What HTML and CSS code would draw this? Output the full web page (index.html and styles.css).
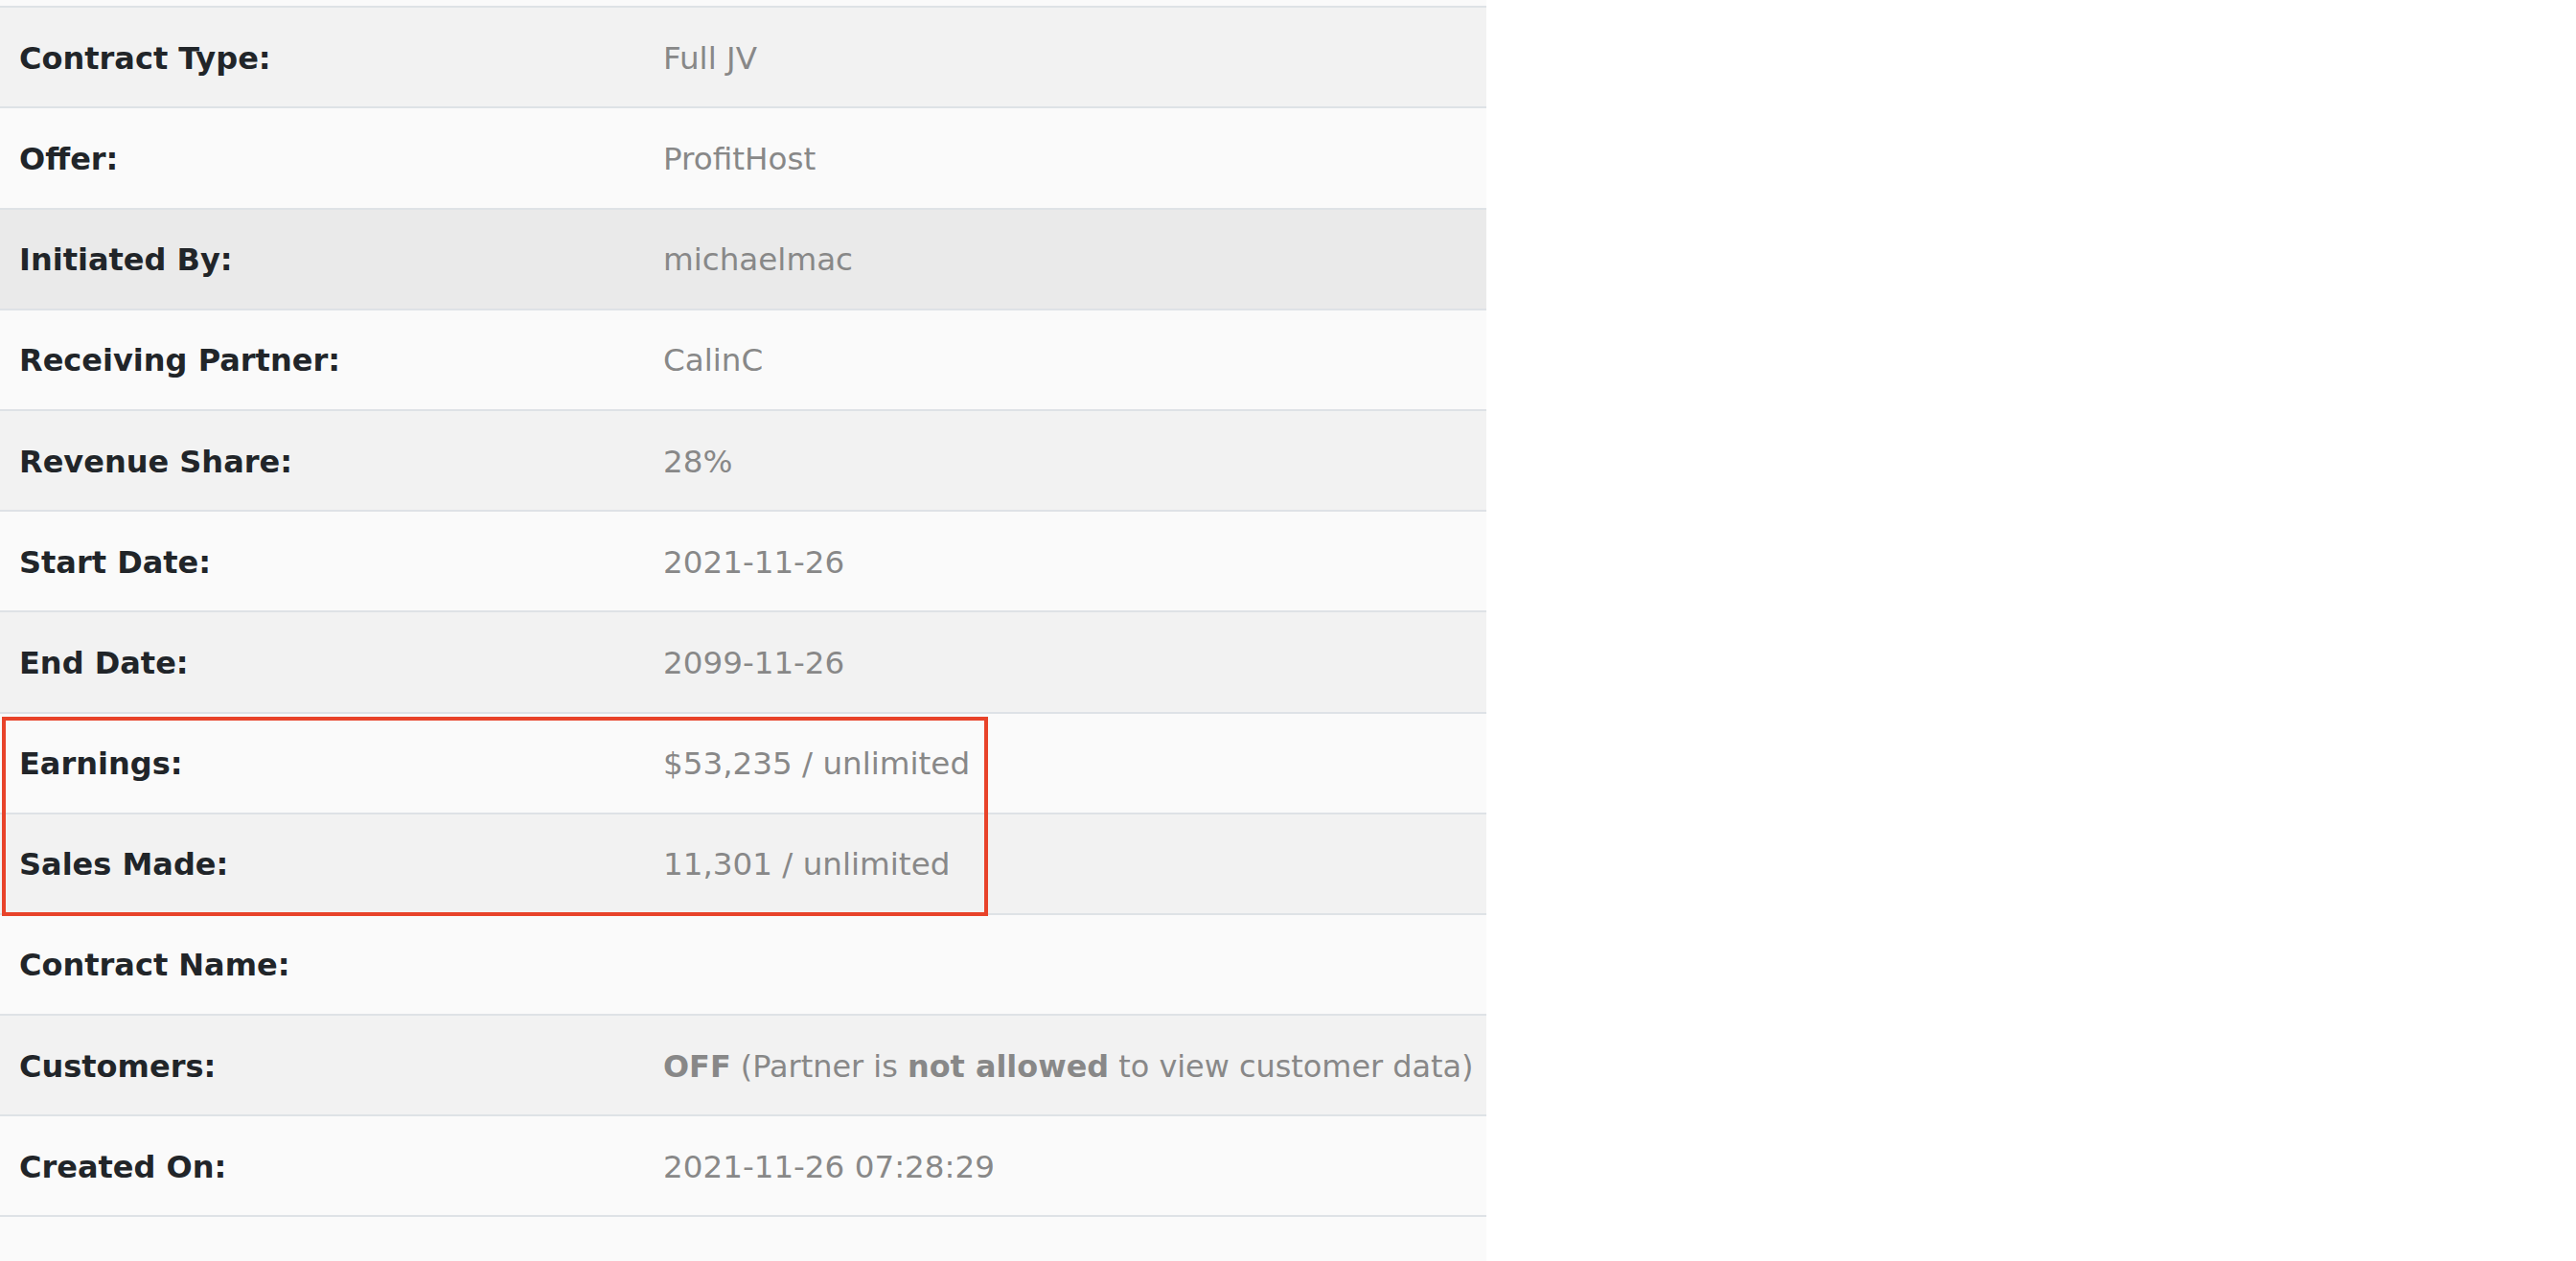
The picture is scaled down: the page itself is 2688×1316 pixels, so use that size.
FILE: index.html
```html
<!DOCTYPE html>
<html lang="en">
<head>
  <meta charset="UTF-8" />
  <title>Contract Details</title>
  <link rel="stylesheet" href="styles.css">
</head>
<body>

  <div class="details">
    <table class="info">
      <tr><th></th><td></td></tr>
      <tr><th>Contract Type:</th><td>Full JV</td></tr>
      <tr><th>Offer:</th><td>ProfitHost</td></tr>
      <tr class="hover"><th>Initiated By:</th><td>michaelmac</td></tr>
      <tr><th>Receiving Partner:</th><td>CalinC</td></tr>
      <tr><th>Revenue Share:</th><td>28%</td></tr>
      <tr><th>Start Date:</th><td>2021-11-26</td></tr>
      <tr><th>End Date:</th><td>2099-11-26</td></tr>
      <tr><th>Earnings:</th><td>$53,235 / unlimited</td></tr>
      <tr><th>Sales Made:</th><td>11,301 / unlimited</td></tr>
      <tr><th>Contract Name:</th><td></td></tr>
      <tr><th>Customers:</th><td class="note"><b>OFF</b> (Partner is <b>not allowed</b> to view customer data)</td></tr>
      <tr><th>Created On:</th><td>2021-11-26 07:28:29</td></tr>
      <tr class="tail"><th></th><td></td></tr>
    </table>
    <div class="highlight"></div>
  </div>

</body>
</html>
```

FILE: styles.css
```css
body { margin: 0; background: #fff; font-family: "DejaVu Sans", Verdana, sans-serif; font-size: 32px; overflow: hidden; }
.details { position: relative; width: 1551px; margin-top: -97px; }
.info { width: 100%; border-collapse: collapse; table-layout: fixed; }
.info tr { border-bottom: 2px solid #dee2e6; background: #fafafa; }
.info tr:nth-child(even) { background: #f2f2f2; }
.info tr.hover { background: #eaeaea; }
.info tr.tail { background: #fafafa; }
.info th, .info td { height: 101.2px; padding: 2px 0 0; vertical-align: middle; text-align: left; white-space: nowrap; }
.info th { width: 672px; padding-left: 20px; color: #212529; font-weight: bold; }
.info td { color: #888; font-size: 32.6px; }
.info td.note { font-size: 31.9px; }
.info td b { font-weight: bold; }
/* red annotation box over earnings + sales */
.highlight {
  position: absolute;
  left: 2px;
  top: 845px;
  width: 1021px;
  height: 200px;
  border: 4px solid #e8432a;
}
```
